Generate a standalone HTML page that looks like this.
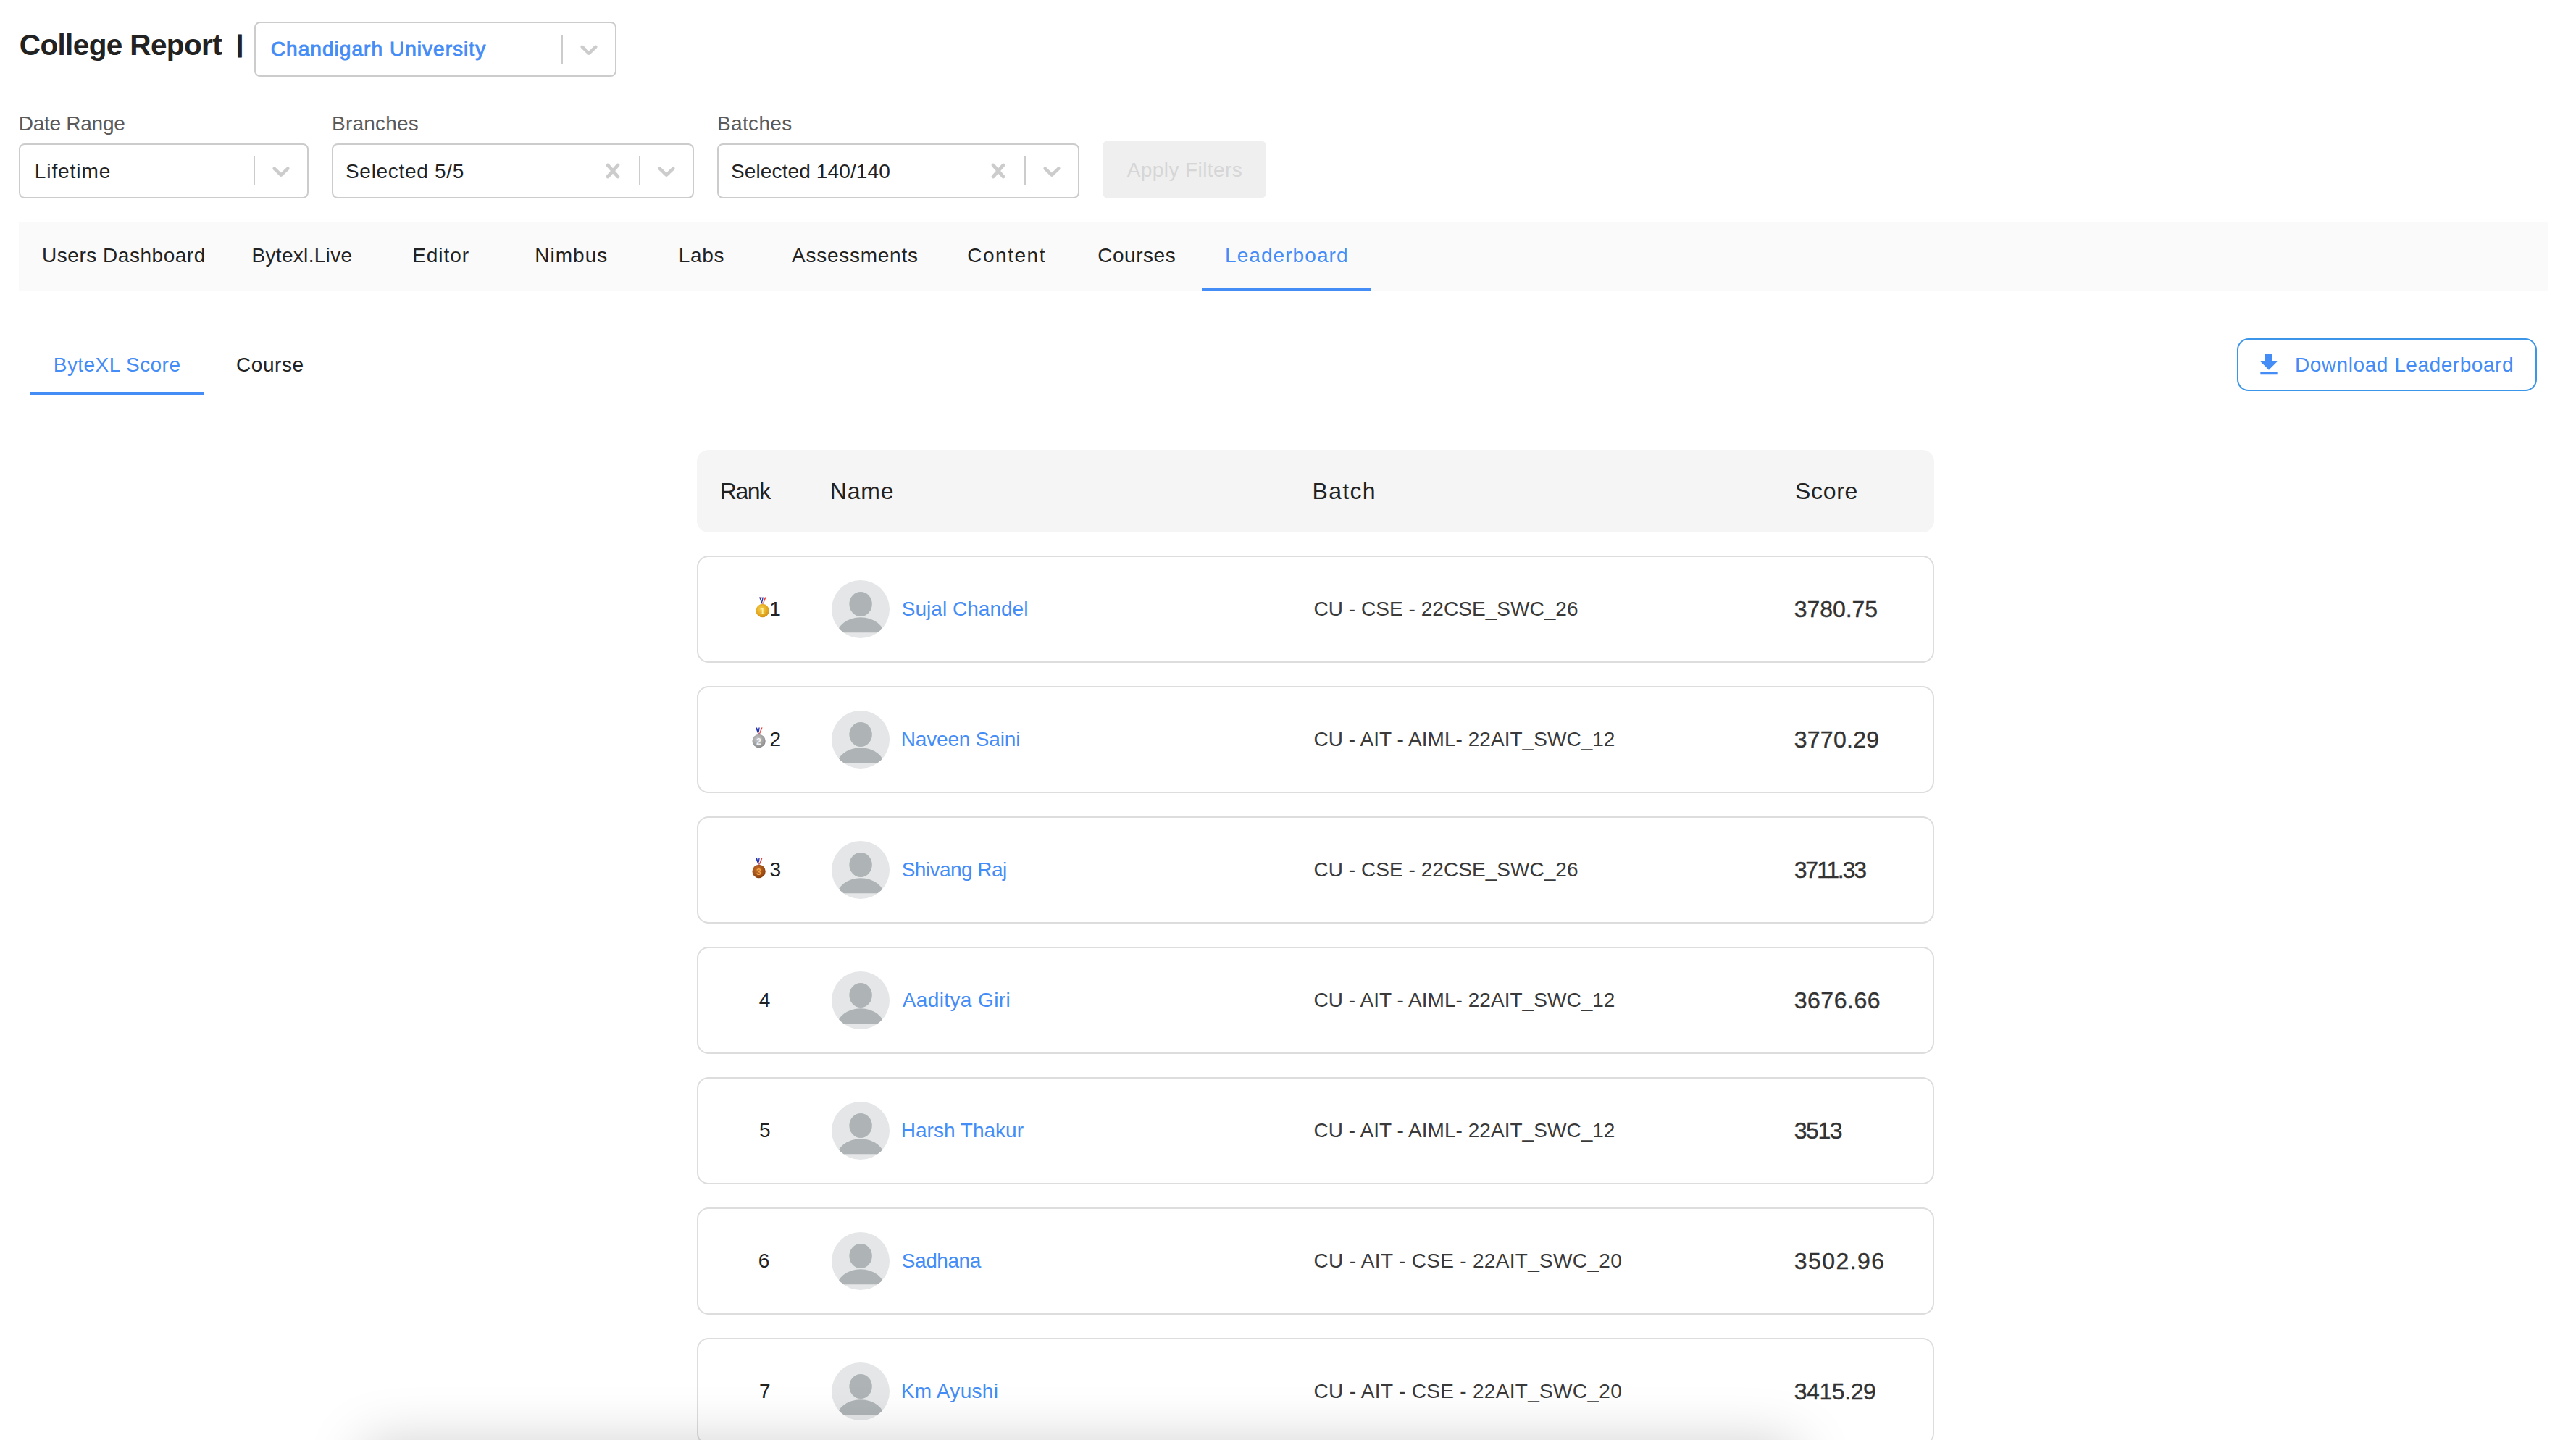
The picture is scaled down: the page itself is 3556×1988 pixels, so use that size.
<!DOCTYPE html>
<html lang="en"><head><meta charset="utf-8"><title>College Report</title>
<style>
html,body{margin:0;padding:0;background:#fff;}
body{width:3556px;height:1988px;position:relative;overflow:hidden;font-family:"Liberation Sans",sans-serif;}
.t{position:absolute;white-space:pre;line-height:1;margin:0;padding:0;border:0;background:none;font-family:inherit;font-weight:400;text-decoration:none;display:block}
.ic{position:absolute;display:block}
.sep{position:absolute;display:block;width:2px;height:40px;background:#cccccc}
.sel{position:absolute;box-sizing:border-box;border:2px solid #cccccc;border-radius:8px;background:#fff}
.box{position:absolute;box-sizing:border-box}
.row{position:absolute;box-sizing:border-box;left:962px;width:1708px;height:148px;border:2px solid #dddddd;border-radius:16px;background:#fff}
</style></head><body>

<header>
<h1 class="t" id="title" style="left:26.75px;top:42.00px;font-size:40.5px;color:#222;font-weight:700;letter-spacing:-0.622px;">College Report</h1><span class="t" id="bar" style="left:326.25px;top:43.00px;font-size:34px;color:#222;font-weight:700;-webkit-text-stroke:1.2px #222;">|</span>
<div class="sel" style="left:351px;top:30px;width:500px;height:76px"></div><svg class="ic" style="left:793px;top:48px" width="40" height="40" viewBox="0 0 20 20"><path fill="#cccccc" d="M4.516 7.548c0.436-0.446 1.043-0.481 1.576 0l3.908 3.747 3.908-3.747c0.533-0.481 1.141-0.446 1.574 0 0.436 0.445 0.408 1.197 0 1.615-0.406 0.418-4.695 4.502-4.695 4.502-0.217 0.223-0.502 0.335-0.787 0.335s-0.57-0.112-0.789-0.335c0 0-4.287-4.084-4.695-4.502s-0.436-1.17 0-1.615z"/></svg><i class="sep" style="left:775px;top:48px"></i><span class="t" id="univ" style="left:373.85px;top:54.00px;font-size:28.0px;color:#448cf6;letter-spacing:1.044px;-webkit-text-stroke:0.9px #448cf6;">Chandigarh University</span>
</header>
<section>
<label class="t" id="l1" style="left:25.75px;top:156.50px;font-size:28.0px;color:#5a5a5a;letter-spacing:-0.268px;">Date Range</label><div class="sel" style="left:26px;top:198px;width:400px;height:76px"></div><svg class="ic" style="left:368px;top:216px" width="40" height="40" viewBox="0 0 20 20"><path fill="#cccccc" d="M4.516 7.548c0.436-0.446 1.043-0.481 1.576 0l3.908 3.747 3.908-3.747c0.533-0.481 1.141-0.446 1.574 0 0.436 0.445 0.408 1.197 0 1.615-0.406 0.418-4.695 4.502-4.695 4.502-0.217 0.223-0.502 0.335-0.787 0.335s-0.57-0.112-0.789-0.335c0 0-4.287-4.084-4.695-4.502s-0.436-1.17 0-1.615z"/></svg><i class="sep" style="left:350px;top:216px"></i><span class="t" id="v1" style="left:47.75px;top:222.50px;font-size:28.0px;color:#222222;letter-spacing:0.926px;">Lifetime</span>
<label class="t" id="l2" style="left:458.00px;top:156.50px;font-size:28.0px;color:#5a5a5a;letter-spacing:0.202px;">Branches</label><div class="sel" style="left:458px;top:198px;width:500px;height:76px"></div><svg class="ic" style="left:900px;top:216px" width="40" height="40" viewBox="0 0 20 20"><path fill="#cccccc" d="M4.516 7.548c0.436-0.446 1.043-0.481 1.576 0l3.908 3.747 3.908-3.747c0.533-0.481 1.141-0.446 1.574 0 0.436 0.445 0.408 1.197 0 1.615-0.406 0.418-4.695 4.502-4.695 4.502-0.217 0.223-0.502 0.335-0.787 0.335s-0.57-0.112-0.789-0.335c0 0-4.287-4.084-4.695-4.502s-0.436-1.17 0-1.615z"/></svg><i class="sep" style="left:882px;top:216px"></i><svg class="ic" style="left:826px;top:216px" width="40" height="40" viewBox="0 0 20 20"><path fill="#cccccc" d="M14.348 14.849c-0.469 0.469-1.229 0.469-1.697 0l-2.651-3.030-2.651 3.029c-0.469 0.469-1.229 0.469-1.697 0-0.469-0.469-0.469-1.229 0-1.697l2.758-3.15-2.759-3.152c-0.469-0.469-0.469-1.228 0-1.697s1.228-0.469 1.697 0l2.652 3.031 2.651-3.031c0.469-0.469 1.228-0.469 1.697 0s0.469 1.229 0 1.697l-2.758 3.152 2.758 3.15c0.469 0.469 0.469 1.229 0 1.698z"/></svg><span class="t" id="v2" style="left:477.00px;top:222.50px;font-size:28.0px;color:#222222;letter-spacing:0.691px;">Selected 5/5</span>
<label class="t" id="l3" style="left:990.00px;top:156.50px;font-size:28.0px;color:#5a5a5a;letter-spacing:0.338px;">Batches</label><div class="sel" style="left:990px;top:198px;width:500px;height:76px"></div><svg class="ic" style="left:1432px;top:216px" width="40" height="40" viewBox="0 0 20 20"><path fill="#cccccc" d="M4.516 7.548c0.436-0.446 1.043-0.481 1.576 0l3.908 3.747 3.908-3.747c0.533-0.481 1.141-0.446 1.574 0 0.436 0.445 0.408 1.197 0 1.615-0.406 0.418-4.695 4.502-4.695 4.502-0.217 0.223-0.502 0.335-0.787 0.335s-0.57-0.112-0.789-0.335c0 0-4.287-4.084-4.695-4.502s-0.436-1.17 0-1.615z"/></svg><i class="sep" style="left:1414px;top:216px"></i><svg class="ic" style="left:1358px;top:216px" width="40" height="40" viewBox="0 0 20 20"><path fill="#cccccc" d="M14.348 14.849c-0.469 0.469-1.229 0.469-1.697 0l-2.651-3.030-2.651 3.029c-0.469 0.469-1.229 0.469-1.697 0-0.469-0.469-0.469-1.229 0-1.697l2.758-3.15-2.759-3.152c-0.469-0.469-0.469-1.228 0-1.697s1.228-0.469 1.697 0l2.652 3.031 2.651-3.031c0.469-0.469 1.228-0.469 1.697 0s0.469 1.229 0 1.697l-2.758 3.152 2.758 3.15c0.469 0.469 0.469 1.229 0 1.698z"/></svg><span class="t" id="v3" style="left:1009.00px;top:222.50px;font-size:28.0px;color:#222222;letter-spacing:0.121px;">Selected 140/140</span>
<div class="box" style="left:1522px;top:194px;width:226px;height:80px;border-radius:8px;background:#efefef"></div><button class="t" id="apply" style="left:1555.75px;top:221.25px;font-size:28.0px;color:#d6d6d6;letter-spacing:0.409px;" disabled>Apply Filters</button>
</section>
<nav><div class="box" style="left:26px;top:306px;width:3492px;height:96px;background:#fafafa"></div>
<a class="t" id="nav0" style="left:58.00px;top:339.00px;font-size:28.0px;color:#222222;letter-spacing:0.528px;">Users Dashboard</a>
<a class="t" id="nav1" style="left:347.50px;top:339.00px;font-size:28.0px;color:#222222;letter-spacing:0.313px;">Bytexl.Live</a>
<a class="t" id="nav2" style="left:569.25px;top:339.00px;font-size:28.0px;color:#222222;letter-spacing:0.926px;">Editor</a>
<a class="t" id="nav3" style="left:738.25px;top:339.00px;font-size:28.0px;color:#222222;letter-spacing:1.028px;">Nimbus</a>
<a class="t" id="nav4" style="left:936.85px;top:339.00px;font-size:28.0px;color:#222222;letter-spacing:0.611px;">Labs</a>
<a class="t" id="nav5" style="left:1093.00px;top:339.00px;font-size:28.0px;color:#222222;letter-spacing:0.745px;">Assessments</a>
<a class="t" id="nav6" style="left:1335.25px;top:339.00px;font-size:28.0px;color:#222222;letter-spacing:1.527px;">Content</a>
<a class="t" id="nav7" style="left:1515.25px;top:339.00px;font-size:28.0px;color:#222222;letter-spacing:0.531px;">Courses</a>
<a class="t" id="nav8" style="left:1691.00px;top:339.00px;font-size:28.0px;color:#448cf6;letter-spacing:1.072px;">Leaderboard</a>
<div class="box" style="left:1659px;top:398px;width:233px;height:4px;background:#448cf6"></div></nav>
<div><a class="t" id="tab0" style="left:73.75px;top:490.25px;font-size:28.0px;color:#448cf6;letter-spacing:0.461px;">ByteXL Score</a><a class="t" id="tab1" style="left:326.00px;top:490.25px;font-size:28.0px;color:#222222;letter-spacing:0.552px;">Course</a><div class="box" style="left:42px;top:541px;width:240px;height:4px;background:#448cf6"></div>
<div class="box" style="left:3088px;top:467px;width:414px;height:73px;border:2px solid #3b95e8;border-radius:16px"></div>
<svg class="ic" style="left:3112px;top:484px" width="40" height="40" viewBox="0 0 24 24"><path fill="#448cf6" d="M19 9h-4V3H9v6H5l7 7 7-7zM5 18v2h14v-2H5z"/></svg>
<button class="t" id="dl" style="left:3167.95px;top:490.00px;font-size:28.0px;color:#448cf6;letter-spacing:0.554px;">Download Leaderboard</button></div>
<main><div class="box" style="left:962px;top:621px;width:1708px;height:114px;border-radius:16px;background:#f5f5f5"></div>
<b class="t" id="h0" style="left:993.75px;top:661.75px;font-size:32.0px;color:#222222;letter-spacing:-1.418px;">Rank</b>
<b class="t" id="h1" style="left:1145.75px;top:661.75px;font-size:32.0px;color:#222222;letter-spacing:0.796px;">Name</b>
<b class="t" id="h2" style="left:1811.50px;top:661.75px;font-size:32.0px;color:#222222;letter-spacing:1.292px;">Batch</b>
<b class="t" id="h3" style="left:2478.00px;top:661.75px;font-size:32.0px;color:#222222;letter-spacing:0.663px;">Score</b>
<div class="row" style="top:767px"></div>
<svg class="ic" style="left:1042.5px;top:824.3px" width="20" height="29" viewBox="0 0 20 29"><defs><radialGradient id="m0" cx="0.42" cy="0.38" r="0.7"><stop offset="0" stop-color="#f7d24a"/><stop offset="0.7" stop-color="#e0a21c"/><stop offset="1" stop-color="#c98a12"/></radialGradient></defs><path d="M5 0.600h2l2.900 9h-1.500z" fill="#2233b0"/><path d="M9.400 0.600h1.400l-1.100 6.600-0.900-1.700z" fill="#2233b0"/><path d="M8 0.600h0.900l-0.300 2.200z" fill="#e8402f"/><path d="M12.800 0.600h1.800l-3.600 9h-1.200z" fill="#ee3a2c"/><circle cx="9.600" cy="19" r="9.150" fill="url(#m0)"/><text x="9.600" y="23.600" font-family="Liberation Sans, sans-serif" font-weight="700" font-size="12.500" text-anchor="middle" fill="#fff3b0">1</text></svg>
<span class="t" id="r0k" style="left:1062.25px;top:826.50px;font-size:28.0px;color:#222222;">1</span>
<svg class="ic" style="left:1148px;top:801px" width="80" height="80" viewBox="0 0 80 80"><defs><clipPath id="c0"><circle cx="40" cy="40" r="40"/></clipPath><clipPath id="b0"><rect x="0" y="0" width="80" height="72.3"/></clipPath></defs><circle cx="40" cy="40" r="40" fill="#e4e6e7"/><g clip-path="url(#c0)"><ellipse cx="40.1" cy="32.9" rx="15.7" ry="17" fill="#aeb3b5"/><g clip-path="url(#b0)"><ellipse cx="40" cy="78.200" rx="33.5" ry="27" fill="#aeb3b5"/></g></g></svg>
<a class="t" id="r0n" style="left:1244.75px;top:826.50px;font-size:28.0px;color:#448cf6;letter-spacing:0.027px;">Sujal Chandel</a><span class="t" id="r0b" style="left:1813.50px;top:826.50px;font-size:28.0px;color:#3a3a3a;letter-spacing:0.041px;">CU - CSE - 22CSE_SWC_26</span><span class="t" id="r0s" style="left:2476.75px;top:825.00px;font-size:32.0px;color:#333;letter-spacing:-0.071px;-webkit-text-stroke:0.4px #333;">3780.75</span>
<div class="row" style="top:947px"></div>
<svg class="ic" style="left:1038.3px;top:1004.3px" width="20" height="29" viewBox="0 0 20 29"><defs><radialGradient id="m1" cx="0.42" cy="0.38" r="0.7"><stop offset="0" stop-color="#c9c9c9"/><stop offset="0.7" stop-color="#9a9a9a"/><stop offset="1" stop-color="#858585"/></radialGradient></defs><path d="M5 0.600h2l2.900 9h-1.500z" fill="#2233b0"/><path d="M9.400 0.600h1.400l-1.100 6.600-0.900-1.700z" fill="#2233b0"/><path d="M8 0.600h0.900l-0.300 2.200z" fill="#e8402f"/><path d="M12.800 0.600h1.800l-3.600 9h-1.200z" fill="#ee3a2c"/><circle cx="9.600" cy="19" r="9.150" fill="url(#m1)"/><text x="9.600" y="23.600" font-family="Liberation Sans, sans-serif" font-weight="700" font-size="12.500" text-anchor="middle" fill="#f2f2f2">2</text></svg>
<span class="t" id="r1k" style="left:1062.50px;top:1006.50px;font-size:28.0px;color:#222222;">2</span>
<svg class="ic" style="left:1148px;top:981px" width="80" height="80" viewBox="0 0 80 80"><defs><clipPath id="c1"><circle cx="40" cy="40" r="40"/></clipPath><clipPath id="b1"><rect x="0" y="0" width="80" height="72.3"/></clipPath></defs><circle cx="40" cy="40" r="40" fill="#e4e6e7"/><g clip-path="url(#c1)"><ellipse cx="40.1" cy="32.9" rx="15.7" ry="17" fill="#aeb3b5"/><g clip-path="url(#b1)"><ellipse cx="40" cy="78.200" rx="33.5" ry="27" fill="#aeb3b5"/></g></g></svg>
<a class="t" id="r1n" style="left:1243.75px;top:1006.50px;font-size:28.0px;color:#448cf6;letter-spacing:-0.171px;">Naveen Saini</a><span class="t" id="r1b" style="left:1813.50px;top:1006.50px;font-size:28.0px;color:#3a3a3a;letter-spacing:0.035px;">CU - AIT - AIML- 22AIT_SWC_12</span><span class="t" id="r1s" style="left:2476.75px;top:1005.00px;font-size:32.0px;color:#333;letter-spacing:0.263px;-webkit-text-stroke:0.4px #333;">3770.29</span>
<div class="row" style="top:1127px"></div>
<svg class="ic" style="left:1038.3px;top:1184.3px" width="20" height="29" viewBox="0 0 20 29"><defs><radialGradient id="m2" cx="0.42" cy="0.38" r="0.7"><stop offset="0" stop-color="#c9722d"/><stop offset="0.7" stop-color="#9a4a14"/><stop offset="1" stop-color="#7f3a0c"/></radialGradient></defs><path d="M5 0.600h2l2.900 9h-1.500z" fill="#2233b0"/><path d="M9.400 0.600h1.400l-1.100 6.600-0.900-1.700z" fill="#2233b0"/><path d="M8 0.600h0.900l-0.300 2.200z" fill="#e8402f"/><path d="M12.800 0.600h1.800l-3.600 9h-1.200z" fill="#ee3a2c"/><circle cx="9.600" cy="19" r="9.150" fill="url(#m2)"/><text x="9.600" y="23.600" font-family="Liberation Sans, sans-serif" font-weight="700" font-size="12.500" text-anchor="middle" fill="#f3a545">3</text></svg>
<span class="t" id="r2k" style="left:1062.50px;top:1186.50px;font-size:28.0px;color:#222222;">3</span>
<svg class="ic" style="left:1148px;top:1161px" width="80" height="80" viewBox="0 0 80 80"><defs><clipPath id="c2"><circle cx="40" cy="40" r="40"/></clipPath><clipPath id="b2"><rect x="0" y="0" width="80" height="72.3"/></clipPath></defs><circle cx="40" cy="40" r="40" fill="#e4e6e7"/><g clip-path="url(#c2)"><ellipse cx="40.1" cy="32.9" rx="15.7" ry="17" fill="#aeb3b5"/><g clip-path="url(#b2)"><ellipse cx="40" cy="78.200" rx="33.5" ry="27" fill="#aeb3b5"/></g></g></svg>
<a class="t" id="r2n" style="left:1244.75px;top:1186.50px;font-size:28.0px;color:#448cf6;letter-spacing:-0.556px;">Shivang Raj</a><span class="t" id="r2b" style="left:1813.50px;top:1186.50px;font-size:28.0px;color:#3a3a3a;letter-spacing:0.041px;">CU - CSE - 22CSE_SWC_26</span><span class="t" id="r2s" style="left:2476.75px;top:1185.00px;font-size:32.0px;color:#333;letter-spacing:-2.175px;-webkit-text-stroke:0.4px #333;">3711.33</span>
<div class="row" style="top:1307px"></div>
<span class="t" id="r3k" style="left:1047.75px;top:1366.50px;font-size:28.0px;color:#222222;">4</span>
<svg class="ic" style="left:1148px;top:1341px" width="80" height="80" viewBox="0 0 80 80"><defs><clipPath id="c3"><circle cx="40" cy="40" r="40"/></clipPath><clipPath id="b3"><rect x="0" y="0" width="80" height="72.3"/></clipPath></defs><circle cx="40" cy="40" r="40" fill="#e4e6e7"/><g clip-path="url(#c3)"><ellipse cx="40.1" cy="32.9" rx="15.7" ry="17" fill="#aeb3b5"/><g clip-path="url(#b3)"><ellipse cx="40" cy="78.200" rx="33.5" ry="27" fill="#aeb3b5"/></g></g></svg>
<a class="t" id="r3n" style="left:1245.75px;top:1366.50px;font-size:28.0px;color:#448cf6;letter-spacing:0.382px;">Aaditya Giri</a><span class="t" id="r3b" style="left:1813.50px;top:1366.50px;font-size:28.0px;color:#3a3a3a;letter-spacing:0.035px;">CU - AIT - AIML- 22AIT_SWC_12</span><span class="t" id="r3s" style="left:2476.75px;top:1365.00px;font-size:32.0px;color:#333;letter-spacing:0.513px;-webkit-text-stroke:0.4px #333;">3676.66</span>
<div class="row" style="top:1487px"></div>
<span class="t" id="r4k" style="left:1048.00px;top:1546.50px;font-size:28.0px;color:#222222;">5</span>
<svg class="ic" style="left:1148px;top:1521px" width="80" height="80" viewBox="0 0 80 80"><defs><clipPath id="c4"><circle cx="40" cy="40" r="40"/></clipPath><clipPath id="b4"><rect x="0" y="0" width="80" height="72.3"/></clipPath></defs><circle cx="40" cy="40" r="40" fill="#e4e6e7"/><g clip-path="url(#c4)"><ellipse cx="40.1" cy="32.9" rx="15.7" ry="17" fill="#aeb3b5"/><g clip-path="url(#b4)"><ellipse cx="40" cy="78.200" rx="33.5" ry="27" fill="#aeb3b5"/></g></g></svg>
<a class="t" id="r4n" style="left:1243.75px;top:1546.50px;font-size:28.0px;color:#448cf6;letter-spacing:0.015px;">Harsh Thakur</a><span class="t" id="r4b" style="left:1813.50px;top:1546.50px;font-size:28.0px;color:#3a3a3a;letter-spacing:0.035px;">CU - AIT - AIML- 22AIT_SWC_12</span><span class="t" id="r4s" style="left:2476.75px;top:1545.00px;font-size:32.0px;color:#333;letter-spacing:-1.480px;-webkit-text-stroke:0.4px #333;">3513</span>
<div class="row" style="top:1667px"></div>
<span class="t" id="r5k" style="left:1046.75px;top:1726.50px;font-size:28.0px;color:#222222;">6</span>
<svg class="ic" style="left:1148px;top:1701px" width="80" height="80" viewBox="0 0 80 80"><defs><clipPath id="c5"><circle cx="40" cy="40" r="40"/></clipPath><clipPath id="b5"><rect x="0" y="0" width="80" height="72.3"/></clipPath></defs><circle cx="40" cy="40" r="40" fill="#e4e6e7"/><g clip-path="url(#c5)"><ellipse cx="40.1" cy="32.9" rx="15.7" ry="17" fill="#aeb3b5"/><g clip-path="url(#b5)"><ellipse cx="40" cy="78.200" rx="33.5" ry="27" fill="#aeb3b5"/></g></g></svg>
<a class="t" id="r5n" style="left:1244.75px;top:1726.50px;font-size:28.0px;color:#448cf6;letter-spacing:-0.431px;">Sadhana</a><span class="t" id="r5b" style="left:1813.50px;top:1726.50px;font-size:28.0px;color:#3a3a3a;letter-spacing:0.312px;">CU - AIT - CSE - 22AIT_SWC_20</span><span class="t" id="r5s" style="left:2476.75px;top:1725.00px;font-size:32.0px;color:#333;letter-spacing:1.446px;-webkit-text-stroke:0.4px #333;">3502.96</span>
<div class="row" style="top:1847px"></div>
<span class="t" id="r6k" style="left:1048.00px;top:1906.50px;font-size:28.0px;color:#222222;">7</span>
<svg class="ic" style="left:1148px;top:1881px" width="80" height="80" viewBox="0 0 80 80"><defs><clipPath id="c6"><circle cx="40" cy="40" r="40"/></clipPath><clipPath id="b6"><rect x="0" y="0" width="80" height="72.3"/></clipPath></defs><circle cx="40" cy="40" r="40" fill="#e4e6e7"/><g clip-path="url(#c6)"><ellipse cx="40.1" cy="32.9" rx="15.7" ry="17" fill="#aeb3b5"/><g clip-path="url(#b6)"><ellipse cx="40" cy="78.200" rx="33.5" ry="27" fill="#aeb3b5"/></g></g></svg>
<a class="t" id="r6n" style="left:1243.75px;top:1906.50px;font-size:28.0px;color:#448cf6;letter-spacing:0.295px;">Km Ayushi</a><span class="t" id="r6b" style="left:1813.50px;top:1906.50px;font-size:28.0px;color:#3a3a3a;letter-spacing:0.312px;">CU - AIT - CSE - 22AIT_SWC_20</span><span class="t" id="r6s" style="left:2476.75px;top:1905.00px;font-size:32.0px;color:#333;letter-spacing:-0.438px;-webkit-text-stroke:0.4px #333;">3415.29</span>
</main>
<div class="box" style="left:504px;top:1995px;width:1974px;height:200px;box-shadow:0 0 80px rgba(0,0,0,0.21)"></div>
<script>(function(){var w=window.innerWidth||3556;if(Math.abs(w-3556)>36){document.documentElement.style.zoom=(w/3556);}})();</script>
</body></html>
